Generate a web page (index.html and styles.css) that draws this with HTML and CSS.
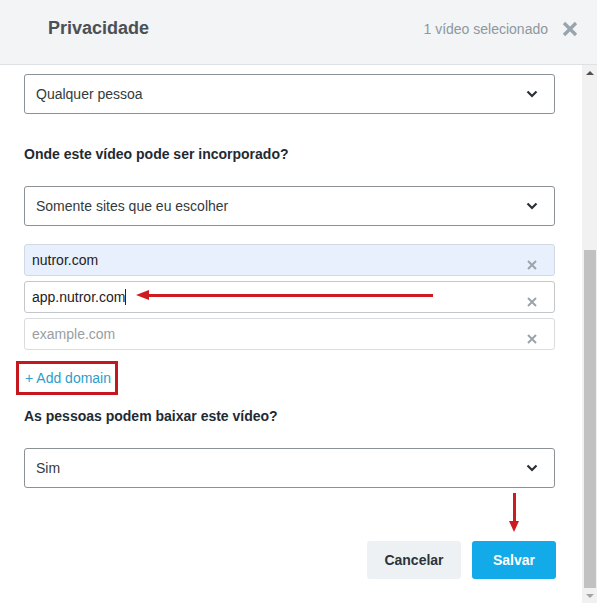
FILE: index.html
```html
<!DOCTYPE html>
<html lang="pt">
<head>
<meta charset="utf-8">
<title>Privacidade</title>
<link rel="stylesheet" href="styles.css">
</head>
<body>
<div class="modal">
  <header class="modal-header">
    <h1 class="title">Privacidade</h1>
    <div class="header-right">
      <span class="selected">1 vídeo selecionado</span>
      <svg class="close" width="16" height="16" viewBox="0 0 16 16"><path d="M2 2 L14 14 M14 2 L2 14" stroke="#9aa4ac" stroke-width="3.2" stroke-linecap="butt"/></svg>
    </div>
  </header>
  <div class="modal-body">
    <div class="content">
      <div class="select first">
        <span>Qualquer pessoa</span>
        <svg class="chev" width="12" height="8" viewBox="0 0 12 8"><path d="M1.5 1.5 L6 6 L10.5 1.5" fill="none" stroke="#2b3036" stroke-width="2.2"/></svg>
      </div>

      <div class="label l2">Onde este vídeo pode ser incorporado?</div>
      <div class="select s2">
        <span>Somente sites que eu escolher</span>
        <svg class="chev" width="12" height="8" viewBox="0 0 12 8"><path d="M1.5 1.5 L6 6 L10.5 1.5" fill="none" stroke="#2b3036" stroke-width="2.2"/></svg>
      </div>

      <div class="domains">
        <div class="domain autofill">
          <span>nutror.com</span>
          <svg class="x" width="10" height="10" viewBox="0 0 10 10"><path d="M1 1 L9 9 M9 1 L1 9" stroke="#9ca3aa" stroke-width="2"/></svg>
        </div>
        <div class="domain focused">
          <span>app.nutror.com<i class="caret"></i></span>
          <svg class="x" width="10" height="10" viewBox="0 0 10 10"><path d="M1 1 L9 9 M9 1 L1 9" stroke="#9ca3aa" stroke-width="2"/></svg>
          <div class="arrow-left"></div>
        </div>
        <div class="domain">
          <span class="placeholder">example.com</span>
          <svg class="x" width="10" height="10" viewBox="0 0 10 10"><path d="M1 1 L9 9 M9 1 L1 9" stroke="#9ca3aa" stroke-width="2"/></svg>
        </div>
      </div>

      <div class="add-row"><a class="add-domain">+ Add domain</a></div>

      <div class="label l3">As pessoas podem baixar este vídeo?</div>
      <div class="select s3">
        <span>Sim</span>
        <svg class="chev" width="12" height="8" viewBox="0 0 12 8"><path d="M1.5 1.5 L6 6 L10.5 1.5" fill="none" stroke="#2b3036" stroke-width="2.2"/></svg>
      </div>

      <div class="actions">
        <button class="btn cancel">Cancelar</button>
        <button class="btn save">Salvar<span class="arrow-down"></span></button>
      </div>
    </div>
    <div class="scrollbar">
      <div class="sb-btn"><span class="tri-up"></span></div>
      <div class="sb-track">
        <div class="sb-thumb"></div>
      </div>
      <div class="sb-btn"><span class="tri-down"></span></div>
    </div>
  </div>
</div>
</body>
</html>
```

FILE: styles.css
```css
* { box-sizing: border-box; }
html, body { margin: 0; padding: 0; background: #fff; }
body {
  font-family: "Liberation Sans", Arial, sans-serif;
  width: 597px;
  height: 603px;
  overflow: hidden;
}
.modal { display: flex; flex-direction: column; height: 603px; }
.modal-header {
  height: 65px;
  background: #f2f4f5;
  border-bottom: 1px solid #dde1e4;
  display: flex;
  align-items: center;
  justify-content: space-between;
  padding: 0 19px 0 48px;
  flex: none;
}
.title {
  margin: 0;
  font-size: 18px;
  font-weight: bold;
  color: #4a5056;
  position: relative;
  top: -4px;
}
.header-right { display: flex; align-items: center; gap: 14px; position: relative; top: -3px; }
.selected { font-size: 14px; color: #8d979f; }
.close { display: block; }

.modal-body { flex: 1; display: flex; min-height: 0; }
.content {
  flex: 1;
  padding: 9px 27px 0 24px;
  display: flex;
  flex-direction: column;
}
.select {
  height: 40px;
  border: 1px solid #8c9196;
  border-radius: 3px;
  display: flex;
  align-items: center;
  justify-content: space-between;
  padding: 0 16px 0 11px;
  font-size: 14px;
  color: #333a40;
}
.chev { display: block; }
.label {
  font-size: 14px;
  font-weight: bold;
  color: #1f2a33;
  line-height: 20px;
}
.l2 { margin-top: 30px; }
.s2 { margin-top: 22px; }
.domains { margin-top: 18px; display: flex; flex-direction: column; gap: 5px; }
.domain {
  position: relative;
  height: 32px;
  border: 1px solid #d9dcdf;
  border-radius: 3px;
  display: flex;
  align-items: center;
  justify-content: space-between;
  padding: 0 17px 0 7px;
  font-size: 14px;
  color: #222;
}
.domain .x { position: relative; top: 5px; }
.domain.autofill { background: #e8f0fe; border-color: #d3d9e2; }
.domain.focused { border-color: #c4c7ca; }
.placeholder { color: #9a9ea3; }
.caret {
  display: inline-block;
  width: 1px;
  height: 16px;
  background: #222;
  vertical-align: -3px;
}
.arrow-left {
  position: absolute;
  left: 124px;
  top: 12px;
  width: 284px;
  height: 3px;
  background: #cf1a1f;
}
.arrow-left::before {
  content: "";
  position: absolute;
  left: -1px;
  top: -4px;
  border-right: 13px solid #cf1a1f;
  border-top: 5.5px solid transparent;
  border-bottom: 5.5px solid transparent;
  transform: translateX(-12px);
}
.add-row { margin-top: 11px; display: flex; }
.add-domain {
  margin-left: -8px;
  border: 3px solid #c5171d;
  padding: 4px 4px 4px 6px;
  font-size: 14px;
  line-height: 20px;
  color: #2e9dcc;
}
.l3 { margin-top: 11px; }
.s3 { margin-top: 22px; }
.actions {
  margin-top: 53px;
  margin-right: -1px;
  display: flex;
  justify-content: flex-end;
  gap: 11px;
}
.btn {
  height: 38px;
  border: none;
  border-radius: 3px;
  font-family: "Liberation Sans", Arial, sans-serif;
  font-size: 14px;
  font-weight: bold;
  padding: 0;
}
.cancel { width: 94px; background: #eef1f3; color: #2c343a; }
.save { width: 84px; background: #12aae8; color: #fff; position: relative; }
.arrow-down {
  position: absolute;
  left: 41px;
  top: -48px;
  width: 3px;
  height: 30px;
  background: #cf1a1f;
}
.arrow-down::after {
  content: "";
  position: absolute;
  left: -4px;
  top: 28px;
  border-top: 11px solid #cf1a1f;
  border-left: 5.5px solid transparent;
  border-right: 5.5px solid transparent;
}
.scrollbar {
  width: 15px;
  flex: none;
  background: #f1f1f1;
  display: flex;
  flex-direction: column;
}
.sb-btn { height: 15px; display: flex; align-items: center; justify-content: center; flex: none; }
.tri-up { border-bottom: 4px solid #505050; border-left: 4px solid transparent; border-right: 4px solid transparent; }
.tri-down { border-top: 4px solid #a3a3a3; border-left: 4px solid transparent; border-right: 4px solid transparent; }
.sb-track { flex: 1; padding: 170px 1px 0 2px; display: flex; flex-direction: column; }
.sb-thumb { flex: 1; background: #c1c1c1; }
```
